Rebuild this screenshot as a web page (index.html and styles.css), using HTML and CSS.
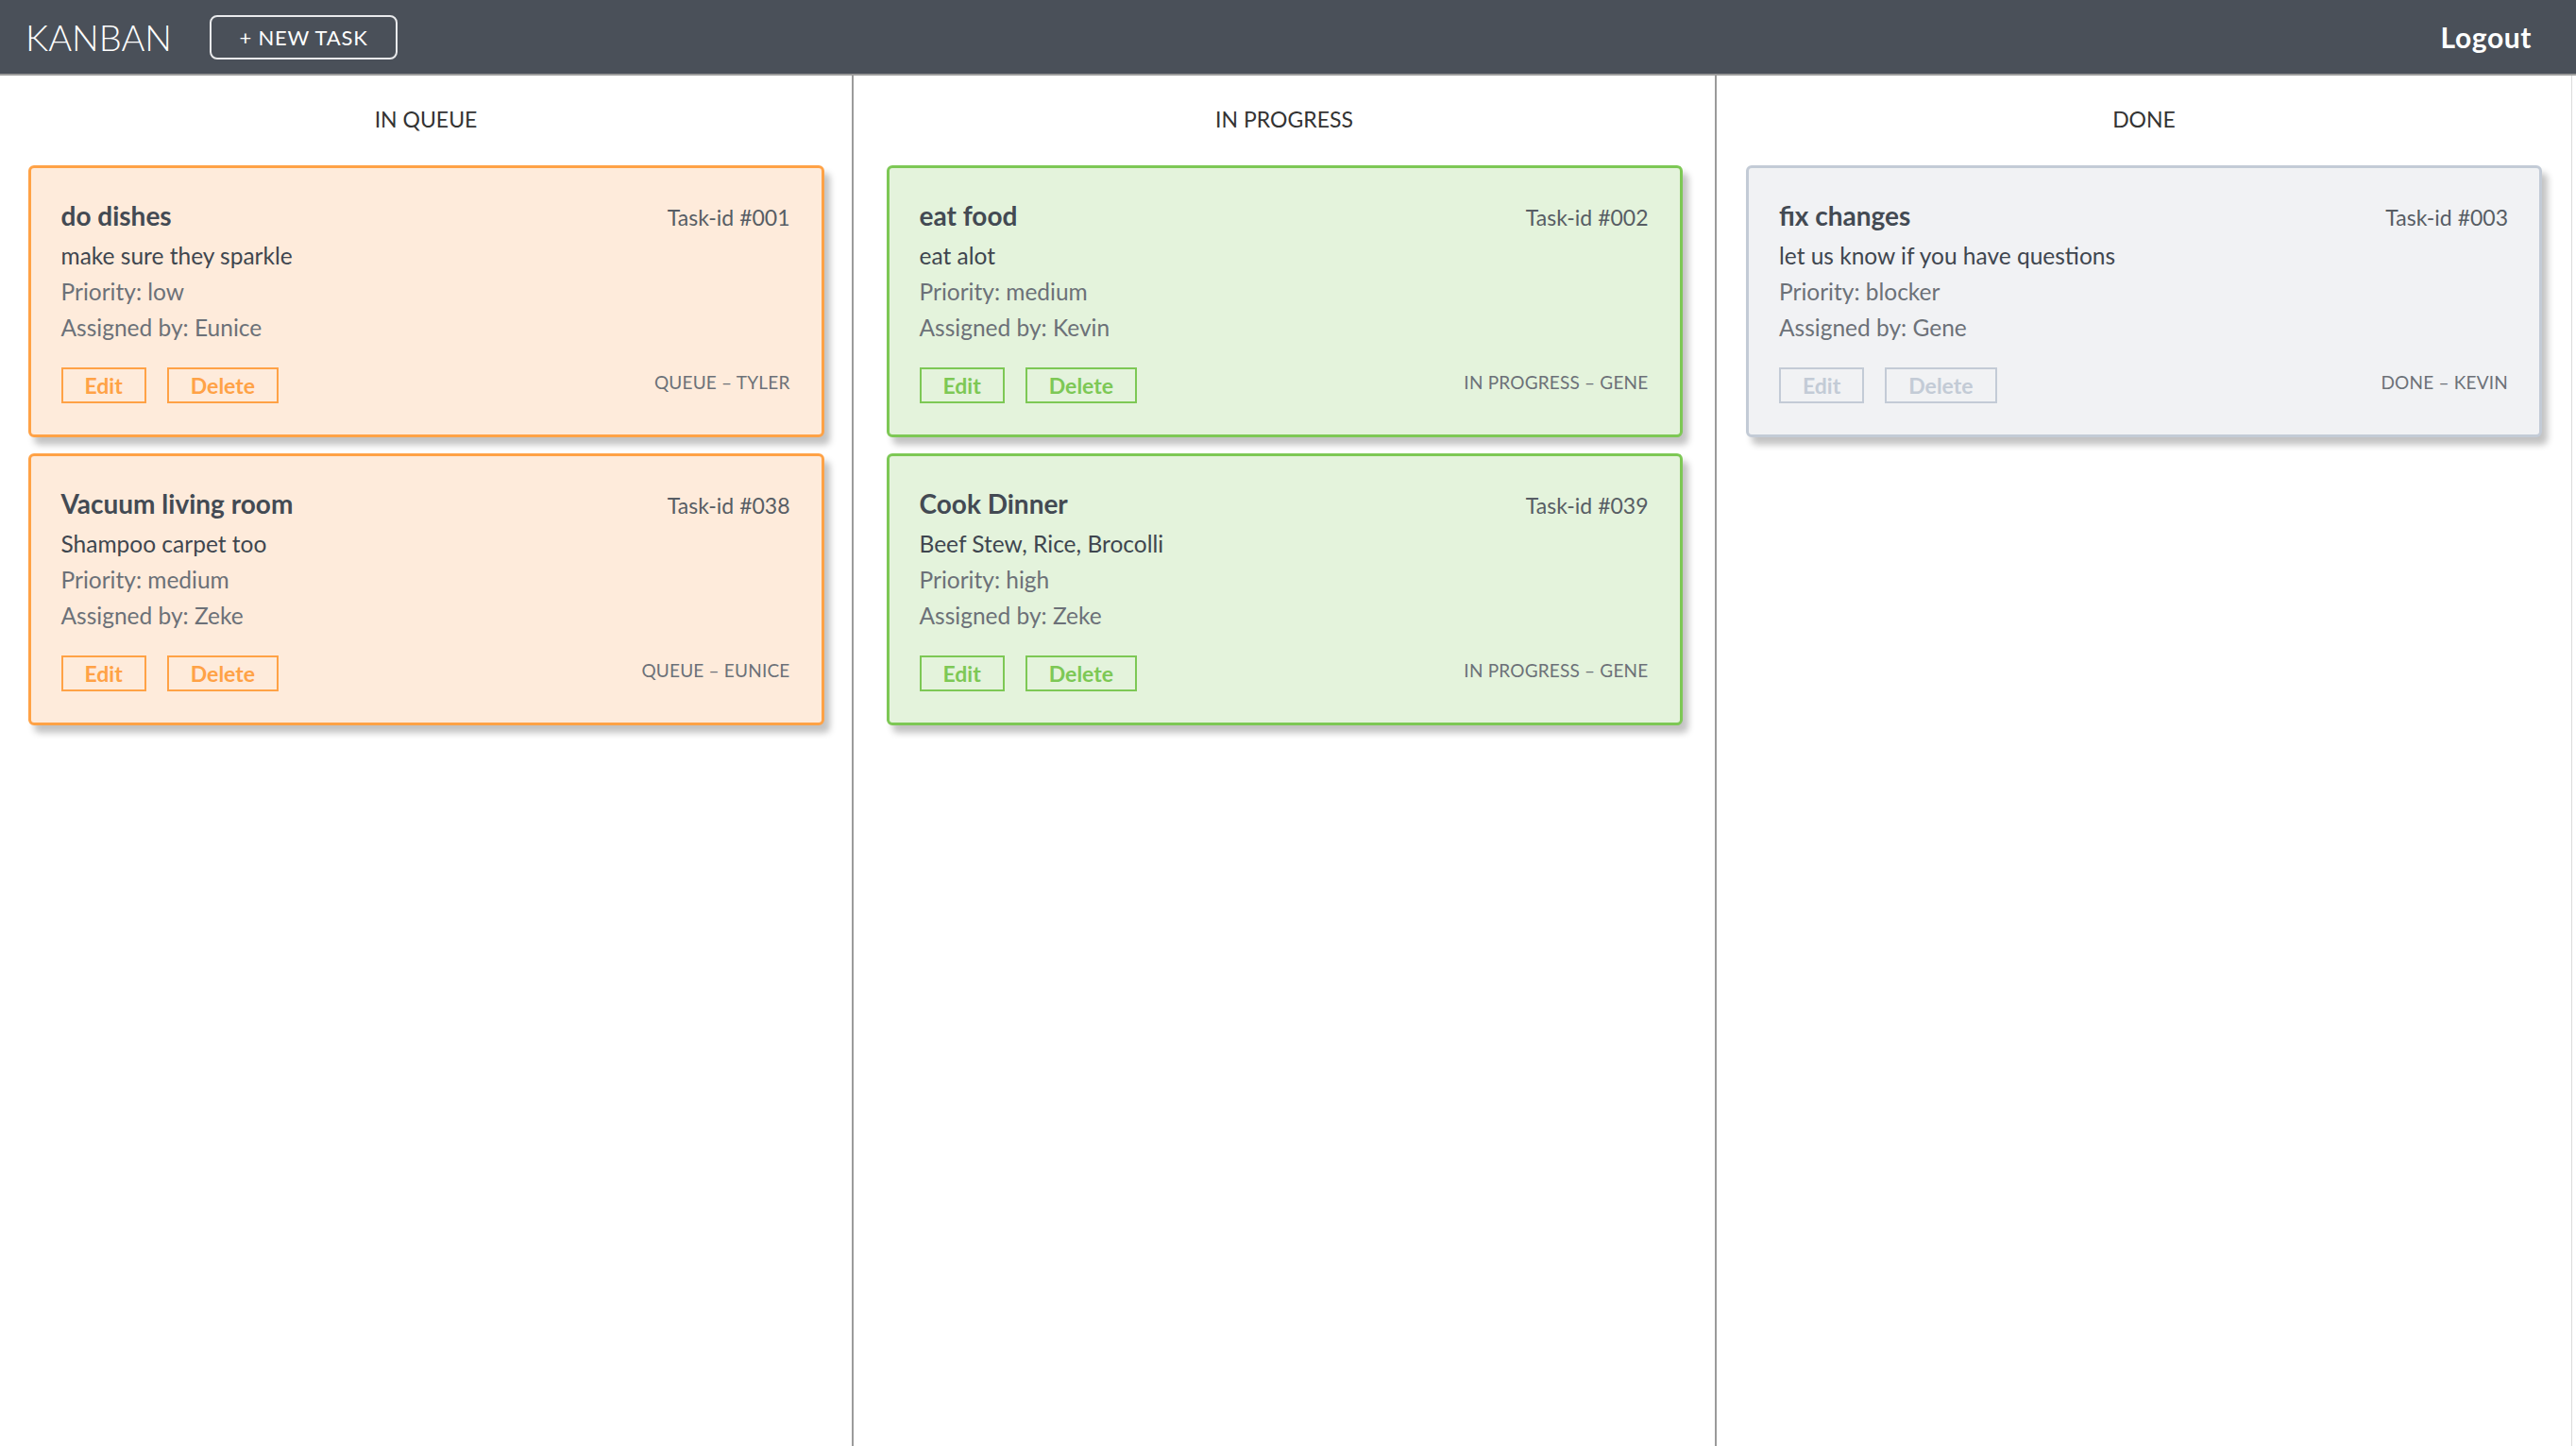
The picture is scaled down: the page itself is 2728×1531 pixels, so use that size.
FILE: index.html
```html
<!DOCTYPE html>
<html lang="en">
<head>
    <meta charset="UTF-8">
    <title>Kanban</title>
    <link rel="stylesheet" href="styles.css">
</head>
<body>
    <header class="topbar">
        <div class="brand">KANBAN</div>
        <button type="button" class="new-task">+ NEW TASK</button>
        <a class="logout" href="#">Logout</a>
    </header>

    <main class="board">
        <section class="column">
            <h2 class="column-title">IN QUEUE</h2>

            <div class="card queue">
                <div class="card-head">
                    <h3 class="card-title">do dishes</h3>
                    <span class="task-id">Task-id #001</span>
                </div>
                <p class="card-desc">make sure they sparkle</p>
                <p class="card-meta">Priority: low</p>
                <p class="card-meta">Assigned by: Eunice</p>
                <div class="card-foot">
                    <button type="button" class="btn">Edit</button>
                    <button type="button" class="btn">Delete</button>
                    <span class="status">Queue – Tyler</span>
                </div>
            </div>

            <div class="card queue">
                <div class="card-head">
                    <h3 class="card-title">Vacuum living room</h3>
                    <span class="task-id">Task-id #038</span>
                </div>
                <p class="card-desc">Shampoo carpet too</p>
                <p class="card-meta">Priority: medium</p>
                <p class="card-meta">Assigned by: Zeke</p>
                <div class="card-foot">
                    <button type="button" class="btn">Edit</button>
                    <button type="button" class="btn">Delete</button>
                    <span class="status">Queue – Eunice</span>
                </div>
            </div>
        </section>

        <section class="column">
            <h2 class="column-title">IN PROGRESS</h2>

            <div class="card progress">
                <div class="card-head">
                    <h3 class="card-title">eat food</h3>
                    <span class="task-id">Task-id #002</span>
                </div>
                <p class="card-desc">eat alot</p>
                <p class="card-meta">Priority: medium</p>
                <p class="card-meta">Assigned by: Kevin</p>
                <div class="card-foot">
                    <button type="button" class="btn">Edit</button>
                    <button type="button" class="btn">Delete</button>
                    <span class="status">In Progress – Gene</span>
                </div>
            </div>

            <div class="card progress">
                <div class="card-head">
                    <h3 class="card-title">Cook Dinner</h3>
                    <span class="task-id">Task-id #039</span>
                </div>
                <p class="card-desc">Beef Stew, Rice, Brocolli</p>
                <p class="card-meta">Priority: high</p>
                <p class="card-meta">Assigned by: Zeke</p>
                <div class="card-foot">
                    <button type="button" class="btn">Edit</button>
                    <button type="button" class="btn">Delete</button>
                    <span class="status">In Progress – Gene</span>
                </div>
            </div>
        </section>

        <section class="column">
            <h2 class="column-title">DONE</h2>

            <div class="card done">
                <div class="card-head">
                    <h3 class="card-title">fix changes</h3>
                    <span class="task-id">Task-id #003</span>
                </div>
                <p class="card-desc">let us know if you have questions</p>
                <p class="card-meta">Priority: blocker</p>
                <p class="card-meta">Assigned by: Gene</p>
                <div class="card-foot">
                    <button type="button" class="btn">Edit</button>
                    <button type="button" class="btn">Delete</button>
                    <span class="status">Done – Kevin</span>
                </div>
            </div>
        </section>
    </main>
</body>
</html>
```

FILE: styles.css
```css
* {
    box-sizing: border-box;
}

body {
    font-family: 'Lato', 'Open Sans', sans-serif;
    margin: 0;
    padding: 0;
    background-color: #ffffff;
    color: #333333;
}

/* top bar */
.topbar {
    display: flex;
    align-items: center;
    height: 80px;
    padding: 0 47px 0 27px;
    background-color: #4a5059;
    border-bottom: 2px solid #9b9b9b;
}

.brand {
    font-size: 38px;
    font-weight: 300;
    color: #ffffff;
}

.new-task {
    margin-left: 40px;
    width: 199px;
    height: 47px;
    padding: 0;
    font-family: inherit;
    font-size: 22px;
    letter-spacing: 0.8px;
    color: #ffffff;
    background: transparent;
    border: 2px solid #e9eaec;
    border-radius: 8px;
    cursor: pointer;
}

.logout {
    margin-left: auto;
    font-size: 30px;
    font-weight: 700;
    letter-spacing: 0.6px;
    color: #ffffff;
    text-decoration: none;
}

/* board */
.board {
    display: grid;
    grid-template-columns: 902px 914px 1fr;
    min-height: calc(100vh - 80px);
    margin-right: 4px;
    border-right: 1px solid #dadada;
}

.column + .column {
    border-left: 2px solid #9b9b9b;
}

.column-title {
    margin: 0 0 35px;
    padding-top: 32px;
    font-size: 23px;
    font-weight: 400;
    line-height: 28px;
    text-align: center;
    color: #333333;
}

/* cards */
.card {
    width: 843px;
    margin: 0 auto 17px;
    padding: 30px 33px 33px 32px;
    border: 3px solid;
    border-radius: 6px;
    box-shadow: 6px 8px 7px rgba(0, 0, 0, 0.24);
}

.card.queue {
    background-color: #feebdb;
    border-color: #ffa246;
}

.card.progress {
    background-color: #e4f3dc;
    border-color: #7dc855;
}

.card.done {
    background-color: #f1f2f4;
    border-color: #c3cbd6;
}

.card-head {
    display: flex;
    justify-content: space-between;
    align-items: baseline;
}

.card-title {
    margin: 0;
    font-size: 28px;
    font-weight: 700;
    line-height: 40px;
    color: #434a53;
}

.task-id {
    font-size: 23px;
    color: #575d64;
}

.card-desc,
.card-meta {
    margin: 0;
    font-size: 24.5px;
    line-height: 38px;
}

.card-desc {
    margin-top: 4px;
    color: #3f464f;
}

.card-meta {
    color: #6c7178;
}

.card-foot {
    display: flex;
    align-items: center;
    gap: 22px;
    margin-top: 23px;
}

.btn {
    height: 38px;
    padding: 0 23px;
    font-family: inherit;
    font-size: 23px;
    font-weight: 700;
    line-height: 34px;
    background: transparent;
    border: 2px solid;
    border-radius: 0;
    cursor: pointer;
}

.queue .btn {
    color: #ffa246;
    border-color: #ffa246;
}

.progress .btn {
    color: #7dc855;
    border-color: #7dc855;
}

.done .btn {
    color: #c3cbd6;
    border-color: #c3cbd6;
}

.status {
    margin-left: auto;
    padding-bottom: 7px;
    font-size: 19px;
    text-transform: uppercase;
    letter-spacing: 0.2px;
    color: #6c7178;
}
```
